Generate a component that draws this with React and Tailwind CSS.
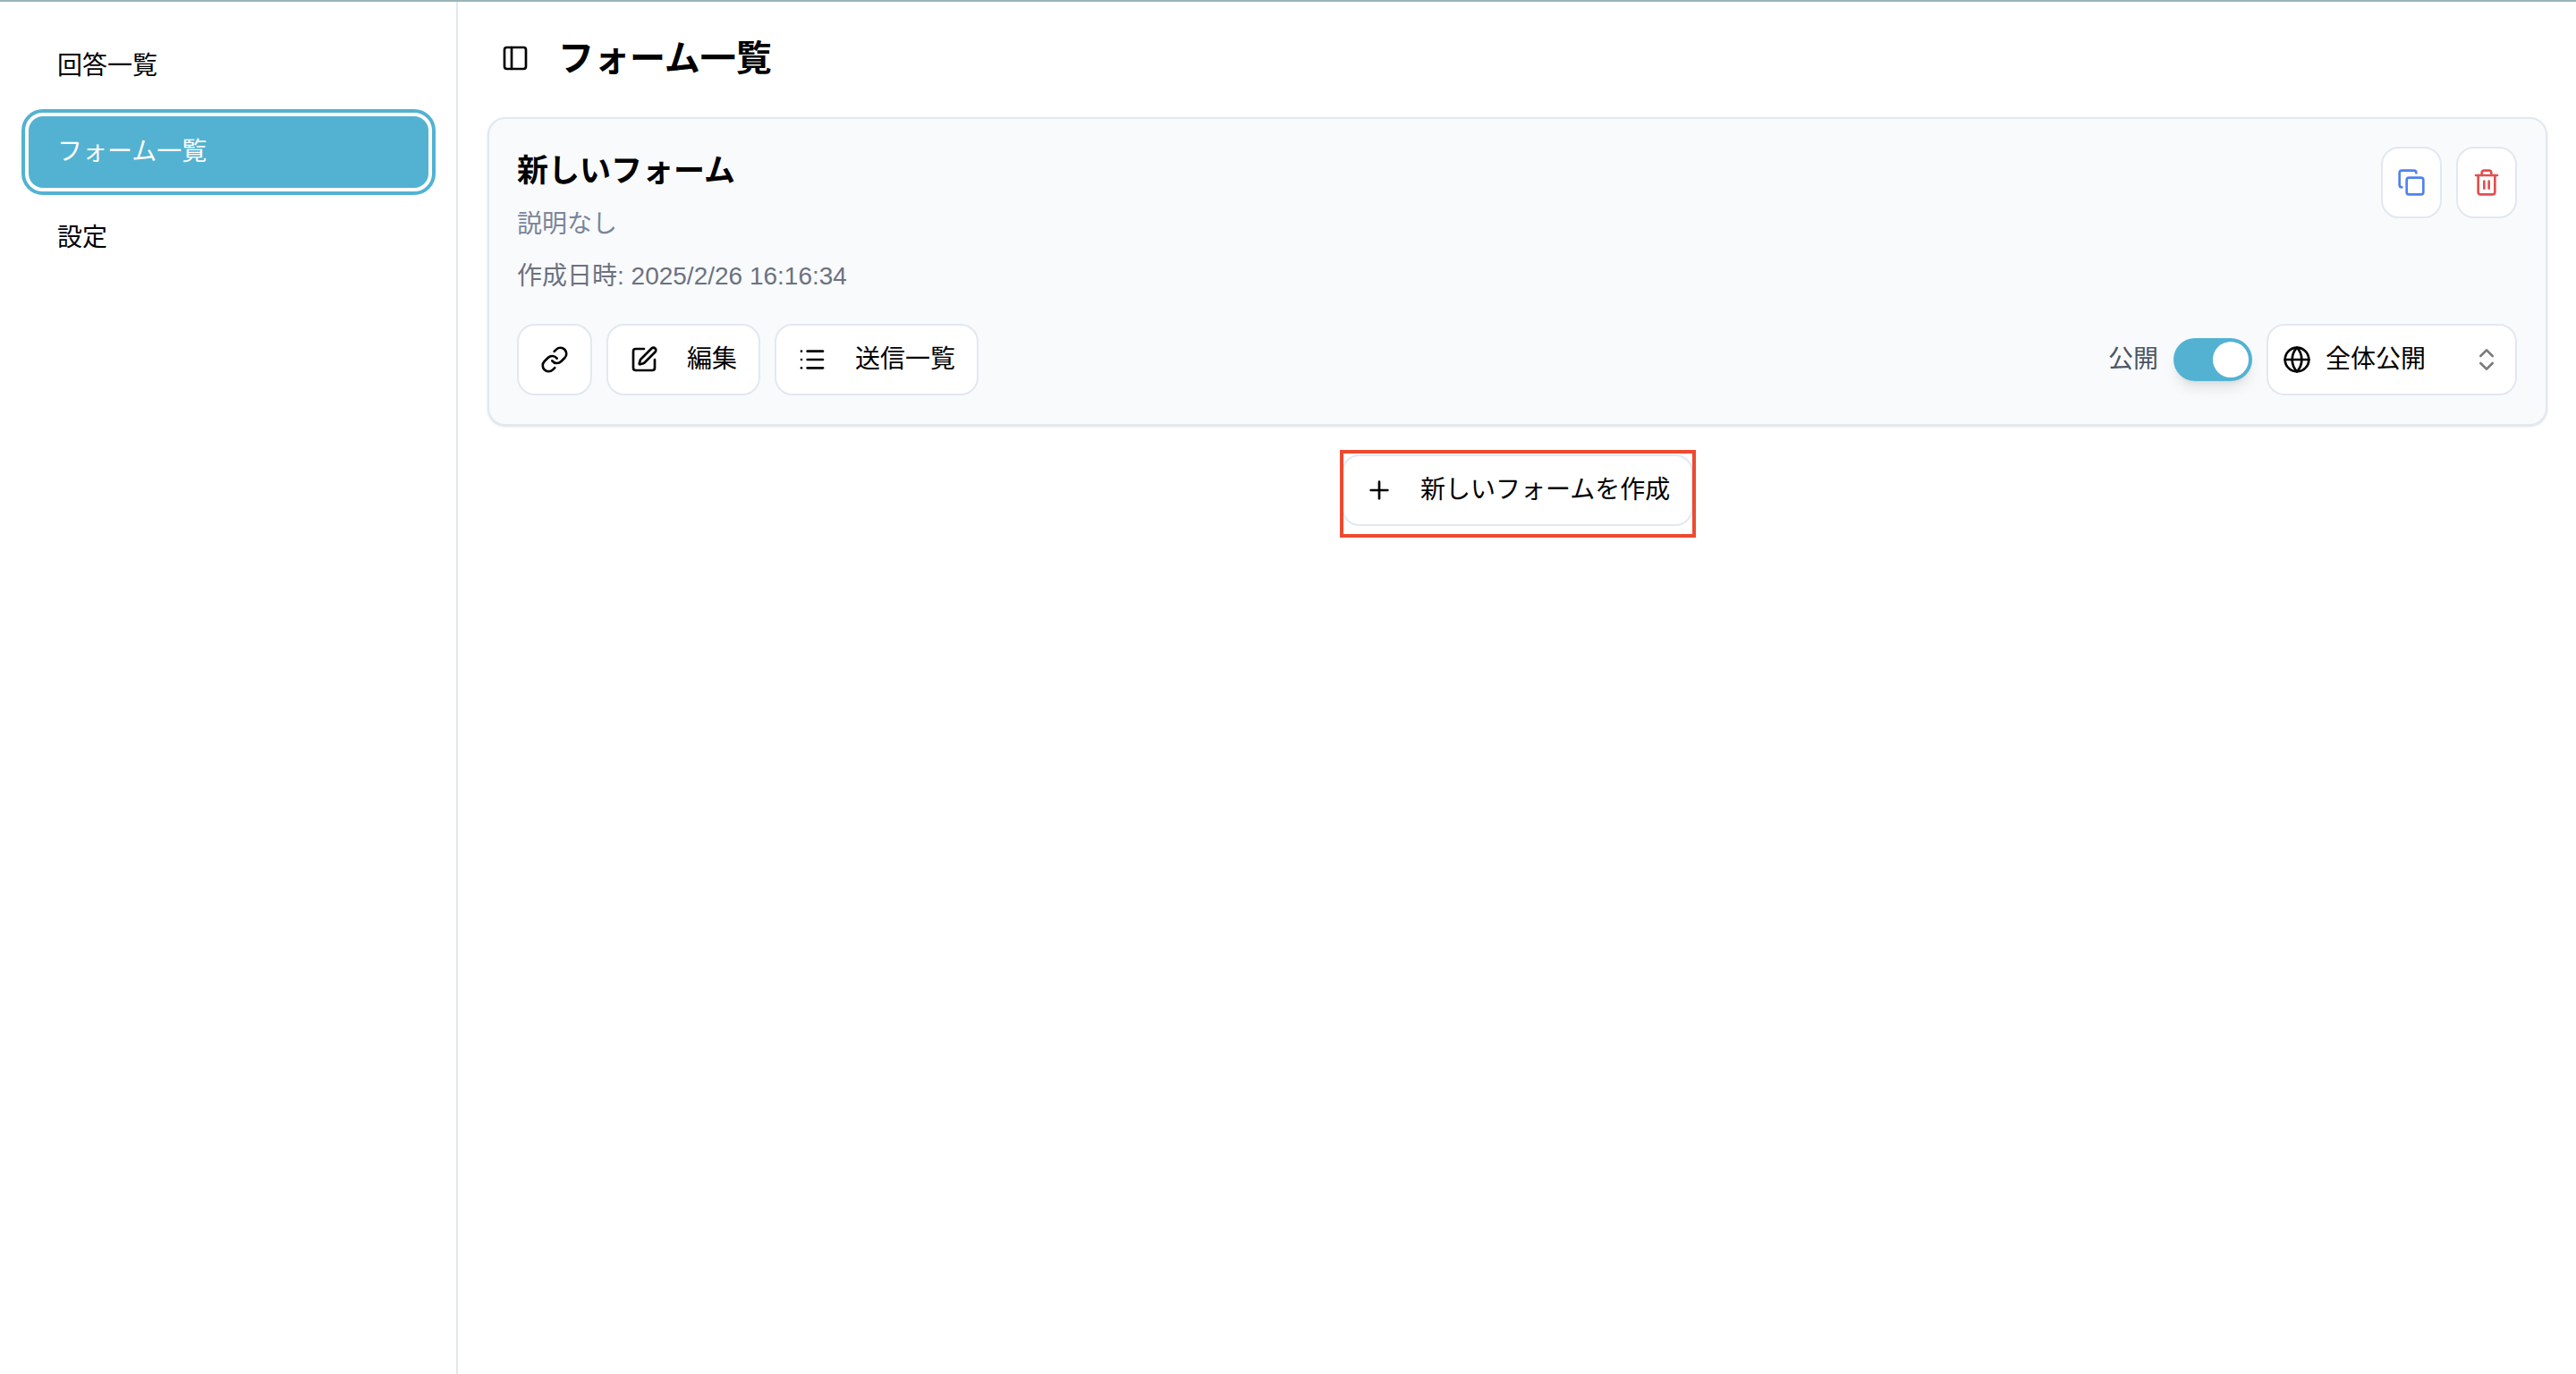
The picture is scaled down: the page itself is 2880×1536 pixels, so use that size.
import {
  ChevronsUpDown,
  Copy,
  Globe,
  Link,
  List,
  PanelLeft,
  Plus,
  SquarePen,
  Trash2,
} from "lucide-react";

const font = "font-['Liberation_Sans','Noto_Sans_CJK_JP',sans-serif]";

function NavItem({ label, active }) {
  if (active) {
    return (
      <div className="h-[80px] rounded-[16px] bg-[#53b2d2] pl-[32px] flex items-center text-[28px] text-white ring-4 ring-white outline-4 outline-offset-4 outline-[#53b2d2]">
        {label}
      </div>
    );
  }
  return (
    <div className="h-[80px] pl-[32px] flex items-center text-[28px] text-black">
      {label}
    </div>
  );
}

function OutlineButton({ className = "", children }) {
  return (
    <button className={`h-[80px] rounded-[20px] border-2 border-[#e2e8f0] bg-white flex items-center text-[28px] text-black ${className}`}>
      {children}
    </button>
  );
}

export default function App() {
  return (
    <div className={`w-[2880px] h-[1536px] bg-white border-t-2 border-[#9ab5b9] flex overflow-hidden ${font}`}>
      <aside className="w-[512px] shrink-0 border-r-2 border-[#e2e8f0] pl-[32px] pr-[31px] pt-[32px] flex flex-col gap-[16px]">
        <NavItem label="回答一覧" />
        <NavItem label="フォーム一覧" active />
        <NavItem label="設定" />
      </aside>

      <main className="flex-1 pl-[33px] pr-[32px]">
        <div className="h-[129px] pl-[15px] flex items-center gap-[32px] pb-[3px]">
          <PanelLeft className="size-[32px] text-black" />
          <h1 className="text-[40px] leading-[60px] font-bold text-black">フォーム一覧</h1>
        </div>

        <section className="h-[345px] rounded-[20px] border-2 border-[#e2e8f0] bg-[#f9fafc] pl-[31px] pr-[32px] pt-[31px] shadow-sm flex flex-col">
          <div className="flex justify-between">
            <div>
              <h2 className="mt-[1px] text-[35px] leading-[52px] font-bold text-black">新しいフォーム</h2>
              <p className="mt-[8px] text-[28px] leading-[52px] text-[#7a8699]">説明なし</p>
              <p className="mt-[6px] text-[28px] leading-[52px] text-[#6b7280]">作成日時: 2025/2/26 16:16:34</p>
            </div>
            <div className="flex gap-[16px]">
              <OutlineButton className="w-[68px] justify-center">
                <Copy className="size-[32px] text-[#4f82ee]" />
              </OutlineButton>
              <OutlineButton className="w-[68px] justify-center">
                <Trash2 className="size-[32px] text-[#e25050]" />
              </OutlineButton>
            </div>
          </div>

          <div className="mt-[27px] flex items-center justify-between">
            <div className="flex gap-[16px]">
              <OutlineButton className="w-[84px] justify-center">
                <Link className="size-[32px]" />
              </OutlineButton>
              <OutlineButton className="w-[172px] pl-[24px] gap-[32px]">
                <SquarePen className="size-[32px]" />
                <span>編集</span>
              </OutlineButton>
              <OutlineButton className="w-[228px] pl-[24px] gap-[32px]">
                <List className="size-[32px]" />
                <span>送信一覧</span>
              </OutlineButton>
            </div>
            <div className="flex items-center">
              <span className="text-[28px] text-[#4b5563]">公開</span>
              <div className="ml-[17px] w-[88px] h-[48px] rounded-full bg-[#53b2d2] p-[4px] flex justify-end shadow-lg">
                <div className="size-[40px] rounded-full bg-white" />
              </div>
              <OutlineButton className="ml-[16px] w-[280px] pl-[16px] pr-[16px]">
                <Globe className="size-[32px]" />
                <span className="ml-[16px]">全体公開</span>
                <ChevronsUpDown className="ml-auto size-[32px] text-[#7b7b7b]" />
              </OutlineButton>
            </div>
          </div>
        </section>

        <div className="mt-[32px] flex justify-center">
          <div className="relative">
            <OutlineButton className="w-[393px] pl-[24px] gap-[30px]">
              <Plus className="size-[32px]" />
              <span>新しいフォームを作成</span>
            </OutlineButton>
            <div className="absolute left-[-2px] right-[-3px] top-[-5px] bottom-[-13px] border-4 border-[#ee4a30]" />
          </div>
        </div>
      </main>
    </div>
  );
}
